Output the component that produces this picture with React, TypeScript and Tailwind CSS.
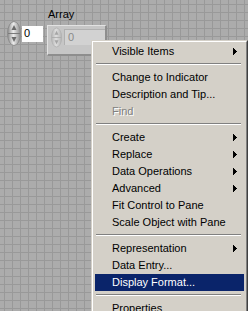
import React from "react";

function Spinner({ disabled = false }: { disabled?: boolean }) {
  const id = disabled ? "spg2" : "spg1";
  const edge = disabled ? "#b4b4b4" : "#8a8a8a";
  const mid = disabled ? "#dcdcdc" : "#ececec";
  const tri = disabled ? "#a8a8a8" : "#6a6a6a";
  return (
    <svg width="14" height="25" viewBox="0 0 14 25">
      <defs>
        <linearGradient id={id} x1="0" x2="1" y1="0" y2="0">
          <stop offset="0" stopColor={edge} />
          <stop offset="0.45" stopColor={mid} />
          <stop offset="1" stopColor={edge} />
        </linearGradient>
      </defs>
      <ellipse cx="7" cy="12.5" rx="6.5" ry="12" fill={`url(#${id})`} stroke={disabled ? "#b0b0b0" : "#8c8c8c"} />
      <line x1="1" y1="12.5" x2="13" y2="12.5" stroke={disabled ? "#a8a8a8" : "#7a7a7a"} />
      <polygon points="7,4 9.5,9 4.5,9" fill={tri} />
      <polygon points="7,21 9.5,16 4.5,16" fill={tri} />
    </svg>
  );
}

function Arrow({ white = false }: { white?: boolean }) {
  return (
    <svg width="4" height="7" viewBox="0 0 4 7" shapeRendering="crispEdges">
      <polygon points="0,0 4,3.5 0,7" fill={white ? "#ffffff" : "#000000"} />
    </svg>
  );
}

type Item =
  | { sep: true }
  | { sep?: false; label: string; sub?: boolean; disabled?: boolean; active?: boolean };

const items: Item[] = [
  { label: "Visible Items", sub: true },
  { sep: true },
  { label: "Change to Indicator" },
  { label: "Description and Tip..." },
  { label: "Find", disabled: true },
  { sep: true },
  { label: "Create", sub: true },
  { label: "Replace", sub: true },
  { label: "Data Operations", sub: true },
  { label: "Advanced", sub: true },
  { label: "Fit Control to Pane" },
  { label: "Scale Object with Pane" },
  { sep: true },
  { label: "Representation", sub: true },
  { label: "Data Entry..." },
  { label: "Display Format...", active: true },
  { sep: true },
  { label: "Properties" },
];

export default function App() {
  return (
    <div className="relative w-[248px] h-[311px] overflow-hidden bg-[#acacac] bg-[image:linear-gradient(to_right,#999999_1px,transparent_1px),linear-gradient(to_bottom,#999999_1px,transparent_1px)] bg-[size:8px_8px] bg-[position:4px_4px] font-['Liberation_Sans',Arial,sans-serif] text-[11px] leading-[13px] text-black">
      {/* Numeric control */}
      <div className="absolute left-[7px] top-[21px] flex items-center gap-[1px]">
        <Spinner />
        <div className="w-[21px] h-[16px] bg-white flex items-center pl-[2px]">0</div>
      </div>

      {/* Array label */}
      <div className="absolute left-[48px] top-[8px]">Array</div>

      {/* Array frame */}
      <div className="absolute left-[47px] top-[25px] w-[60px] h-[31px] bg-[#c6c6c6] border-t border-l border-t-[#e2e2e2] border-l-[#e2e2e2] border-b-2 border-r-2 border-b-[#8e8e8e] border-r-[#8e8e8e] flex items-start gap-[2px] pl-[3px] pt-[1px]">
        <div className="w-[12px] h-[21px] overflow-hidden flex justify-center">
          <svg width="12" height="21" viewBox="0 0 14 25">
            <defs>
              <linearGradient id="spg3" x1="0" x2="1" y1="0" y2="0">
                <stop offset="0" stopColor="#b4b4b4" />
                <stop offset="0.45" stopColor="#dedede" />
                <stop offset="1" stopColor="#b4b4b4" />
              </linearGradient>
            </defs>
            <ellipse cx="7" cy="12.5" rx="6.5" ry="12" fill="url(#spg3)" stroke="#b0b0b0" />
            <line x1="1" y1="12.5" x2="13" y2="12.5" stroke="#a8a8a8" />
            <polygon points="7,4 9.5,9 4.5,9" fill="#a4a4a4" />
            <polygon points="7,21 9.5,16 4.5,16" fill="#a4a4a4" />
          </svg>
        </div>
        <div className="mt-[2px] w-[44px] h-[16px] bg-[#d2d2d2] border-t border-l border-t-[#b0b0b0] border-l-[#b0b0b0] flex items-center pl-[3px] text-[#8a8a8a]">
          0
        </div>
      </div>

      {/* Context menu */}
      <div className="absolute left-[91px] top-[40px] w-[157px] border border-t-[#d4d0c8] border-l-[#d4d0c8] border-r-[#404040] border-b-[#404040]">
        <div className="bg-[#d4d0c8] border border-t-white border-l-white border-r-[#808080] border-b-[#808080] px-[2px] py-[1px] flex flex-col">
          {items.map((it, i) =>
            it.sep ? (
              <div key={i} className="h-[9px] pt-[3px] pl-[1px] pr-[3px]">
                <div className="h-[1px] bg-[#808080]" />
                <div className="h-[1px] bg-white" />
              </div>
            ) : (
              <div
                key={i}
                className={
                  it.active
                    ? "h-[17px] flex items-center justify-between pl-[17px] pr-[7px] bg-[#0a246a] text-white"
                    : it.disabled
                    ? "h-[17px] flex items-center justify-between pl-[17px] pr-[7px] text-[#808080] [text-shadow:1px_1px_0_#ffffff]"
                    : "h-[17px] flex items-center justify-between pl-[17px] pr-[7px]"
                }
              >
                <span className="whitespace-nowrap">{it.label}</span>
                {it.sub ? <Arrow white={it.active} /> : null}
              </div>
            )
          )}
        </div>
      </div>
    </div>
  );
}
